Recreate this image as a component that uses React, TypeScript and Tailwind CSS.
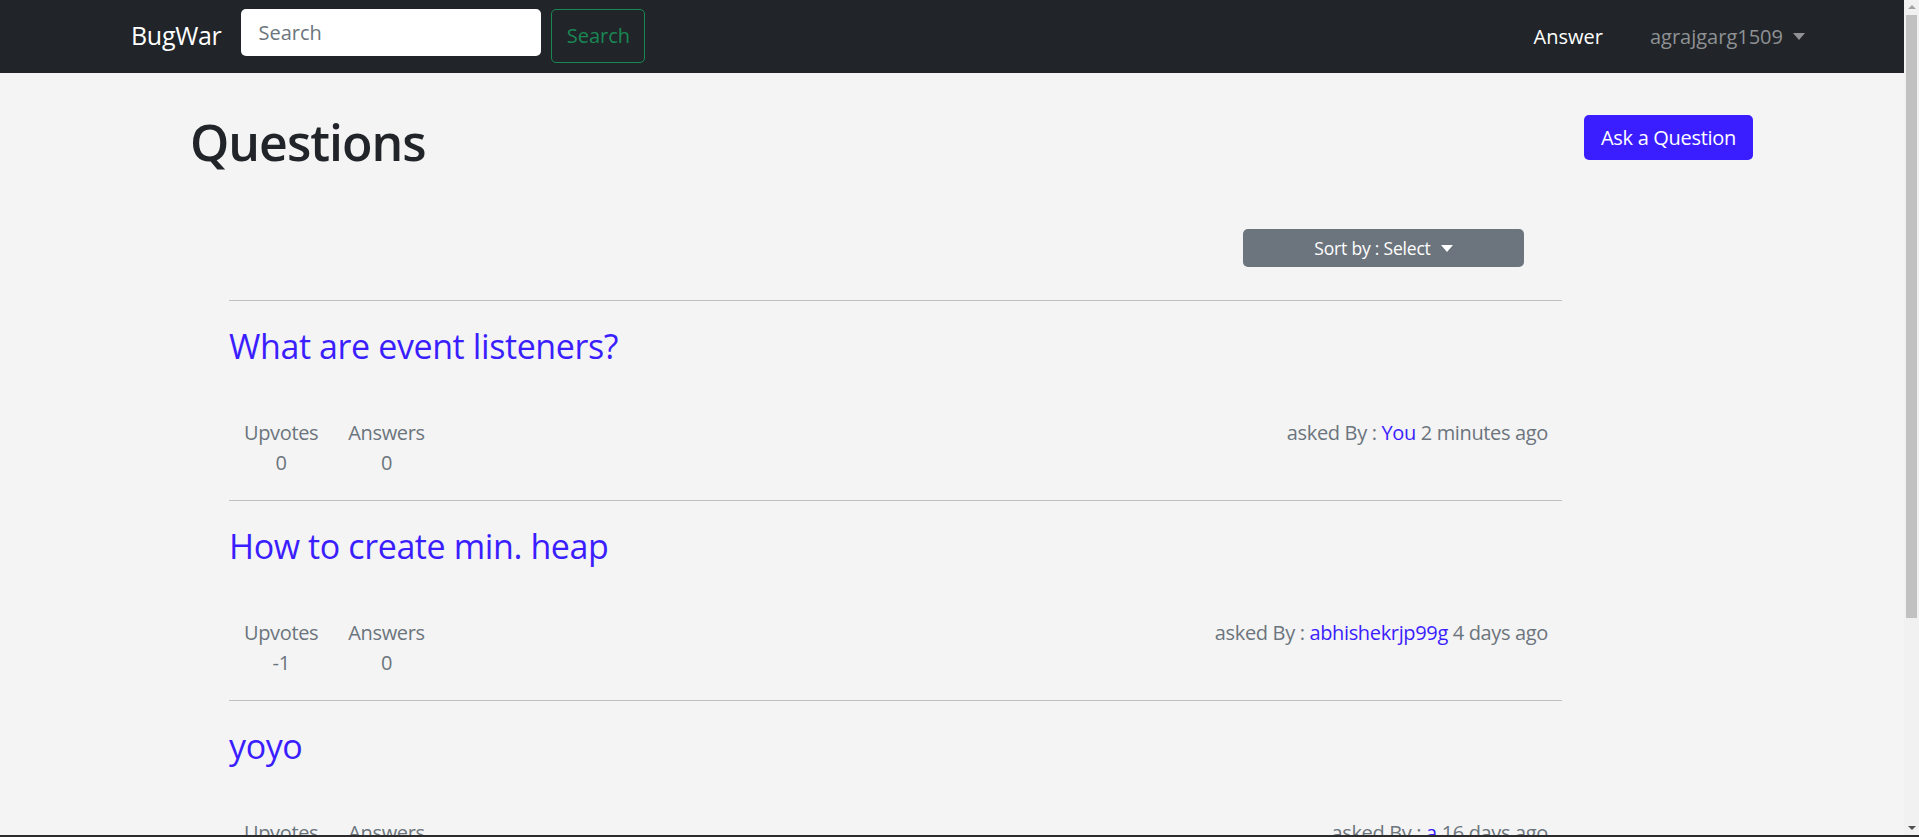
type Question = {
  title: string
  upvotes: number
  answers: number
  author: string
  when: string
}

const questions: Question[] = [
  { title: "What are event listeners?", upvotes: 0, answers: 0, author: "You", when: "2 minutes ago" },
  { title: "How to create min. heap", upvotes: -1, answers: 0, author: "abhishekrjp99g", when: "4 days ago" },
  { title: "yoyo", upvotes: 0, answers: 1, author: "a", when: "16 days ago" },
]

function Caret() {
  // bootstrap style dropdown triangle
  return (
    <span className="inline-block w-0 h-0 border-l-[6px] border-r-[6px] border-t-[7px] border-l-transparent border-r-transparent border-t-current" />
  )
}

function QuestionItem({ q }: { q: Question }) {
  return (
    <div className="border-t border-[#c0c0c1] pt-[24px] pb-[22px]">
      <a href="#" className="block text-[34px] leading-[42px] tracking-[-0.4px] text-[#3b1eff]">
        {q.title}
      </a>
      <div className="mt-[51px] flex justify-between text-[20px] leading-[30px] tracking-[-0.35px] text-[#6c757d]">
        <div className="flex text-center">
          <div className="px-[15px]">
            <div>Upvotes</div>
            <div>{q.upvotes}</div>
          </div>
          <div className="px-[15px]">
            <div>Answers</div>
            <div>{q.answers}</div>
          </div>
        </div>
        <div className="pr-[14px]">
          asked By : <a href="#" className="text-[#3b1eff]">{q.author}</a> {q.when}
        </div>
      </div>
    </div>
  )
}

// the page overflows, so draw the classic scrollbar the reference shows
function Scrollbar() {
  return (
    <div className="fixed top-0 right-0 bottom-[2px] w-[15px] bg-[#f1f1f1] flex flex-col items-center">
      <div className="h-[14px] flex items-center justify-center">
        <span className="w-0 h-0 border-l-[4px] border-r-[4px] border-b-[4px] border-l-transparent border-r-transparent border-b-[#a3a3a3]" />
      </div>
      <div className="mt-[1px] h-[603px] w-[11px] bg-[#c1c1c1]" />
      <div className="mt-auto h-[14px] flex items-center justify-center">
        <span className="w-0 h-0 border-l-[4px] border-r-[4px] border-t-[4px] border-l-transparent border-r-transparent border-t-[#505050]" />
      </div>
    </div>
  )
}

export default function App() {
  return (
    <div className="min-h-[1115px] bg-[#f4f4f4] font-['Open_Sans',sans-serif]">
      <div className="mr-[15px]">
        <nav className="h-[73px] bg-[#212529] flex pl-[131px] pr-[99px]">
          <a href="#" className="mt-[17px] text-[25px] leading-[36px] tracking-[-0.3px] text-white">
            BugWar
          </a>
          <div className="ml-[20px] mt-[9px] flex items-start gap-[10px]">
            <input
              placeholder="Search"
              className="w-[300px] h-[47px] rounded-[5px] bg-white px-[17px] text-[20px] text-[#212529] placeholder:text-[#6c757d] outline-none"
            />
            <button className="h-[54px] w-[94px] rounded-[5px] border border-[#198754] text-[20px] text-[#198754]">
              Search
            </button>
          </div>
          <div className="ml-auto flex items-center text-[20px]">
            <a href="#" className="text-white">
              Answer
            </a>
            <a href="#" className="ml-[47px] flex items-center gap-[10px] text-[#8f9194]">
              agrajgarg1509
              <Caret />
            </a>
          </div>
        </nav>

        <main className="pl-[190px] pr-[151px]">
          <div className="flex items-start justify-between pt-[39px]">
            <h1 className="text-[50px] leading-[60px] font-semibold tracking-[-1px] text-[#212529]">Questions</h1>
            <button className="mt-[3px] h-[45px] w-[169px] rounded-[5px] bg-[#3b1eff] text-[20px] tracking-[-0.3px] text-white">
              Ask a Question
            </button>
          </div>

          <div className="mt-[57px] flex justify-end pr-[229px]">
            <button className="h-[38px] w-[281px] rounded-[5px] bg-[#6c757d] text-[17.5px] tracking-[-0.2px] text-white flex items-center justify-center gap-[10px]">
              Sort by : Select
              <Caret />
            </button>
          </div>

          <div className="mt-[33px] ml-[39px] mr-[191px]">
            {questions.map((q) => (
              <QuestionItem key={q.title} q={q} />
            ))}
          </div>
        </main>
      </div>

      <Scrollbar />
      <div className="fixed bottom-0 left-0 right-0 h-[2px] bg-[#2b2b2b]" />
    </div>
  )
}
